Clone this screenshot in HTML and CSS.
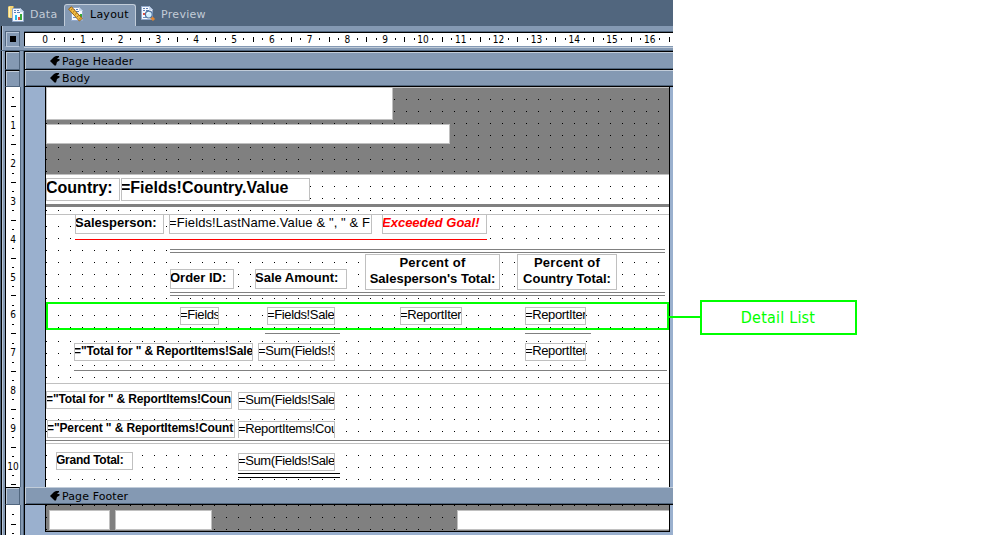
FILE: index.html
```html
<!DOCTYPE html>
<html lang="en">
<head>
<meta charset="utf-8">
<title>Report Designer</title>
<link rel="stylesheet" href="styles.css">
</head>
<body>
<svg class="defs" width="0" height="0" aria-hidden="true">
  <symbol id="arrow" viewBox="0 0 10 10"><path d="M0 5L4 1L6 0H9V1L7 3H9.5V4.5L7 6L6 9.5H4.5L4 9Z" fill="#000"/></symbol>
  <symbol id="sheet" viewBox="0 0 12 14"><path d="M.5.5H8.5L11.5 3.5V13.5H.5Z" fill="#f6f9ff" stroke="#91a8cb"/><path d="M8 0V4H12" fill="#c5d5ed"/><path d="M2 2.5H4M5 2.5H7M2 4.5H4M5 4.5H8" stroke="#5d7fb4"/></symbol>
</svg>
<div class="workspace">
  <main class="designer">
    <nav class="tabs">
      <div class="tab tab-data">
        <svg class="icon" viewBox="0 0 16 16"><path d="M0 1L1 0H5L6 1V11L5 12H1L0 11Z" fill="#f4d476"/><path d="M1 1H2V11H1Z" fill="#fff1b3"/><path d="M5 1H6V11H5Z" fill="#c99b36"/><svg x="4" y="2" width="12" height="14"><use href="#sheet"/></svg><path d="M7 9H9V14H7Z" fill="#27b9e8"/><path d="M10 11H12V14H10Z" fill="#e04f42"/><path d="M12 8H14V14H12Z" fill="#35a938"/></svg>
        <span>Data</span>
      </div>
      <div class="tab tab-layout">
        <svg class="icon" viewBox="0 0 16 16"><svg x="3" y="1" width="12" height="14"><use href="#sheet"/></svg><path d="M5 8.5H8M5 11.5H8" stroke="#6d8fc2"/><path d="M9 9H11V12H9Z" fill="#e04f42"/><path d="M12 8H14V11H12Z" fill="#35a938"/><path d="M.5 3L3.5.8L14.3 12.5L11.3 15Z" fill="#f1bd42" stroke="#986018"/><path d="M3 4L4.5 3M5 6.3L6.5 5M7 8.5L8.7 7.2M9.2 10.8L10.6 9.5M11.2 13L12.8 11.7" stroke="#8b5919" stroke-width=".8"/></svg>
        <span>Layout</span>
      </div>
      <div class="tab tab-preview">
        <svg class="icon" viewBox="0 0 16 16"><svg x="1" y="0" width="12" height="14"><use href="#sheet"/></svg><path d="M3 7H5V9H3Z" fill="#e04f42"/><path d="M3 11.5H6" stroke="#6d8fc2"/><path d="M11 11L14 14" stroke="#de8634" stroke-width="3"/><circle cx="8.8" cy="8.6" r="3.4" fill="#d4efff" stroke="#52749f" stroke-width="1.2"/><path d="M7 8L9 6.3" stroke="#fff"/></svg>
        <span>Preview</span>
      </div>
    </nav>
    <div class="top-ruler">
      <div class="corner"><i></i></div>
      <svg class="ruler-h" id="ruler-h" width="648" height="13"></svg>
    </div>
    <div class="workarea">
      <aside class="side">
        <div class="knob"></div>
        <div class="knob"></div>
        <svg class="ruler-v" id="ruler-body" width="14" height="400"></svg>
        <div class="knob knob-footer"></div>
        <svg class="ruler-v" id="ruler-footer" width="14" height="30"></svg>
      </aside>
      <section class="surface">
        <header class="band"><svg><use href="#arrow"/></svg><span>Page Header</span></header>
        <header class="band"><svg><use href="#arrow"/></svg><span>Body</span></header>
        <div class="canvas">
          <div class="grid title ruled">
            <div class="box" style="left:0;top:0;width:347px;height:33px"></div>
            <div class="box" style="left:0;top:37px;width:404px;height:20px"></div>
          </div>
          <div class="grid country ruled">
            <div class="box large" style="left:0;top:4px;width:74px;height:23px">Country:</div>
            <div class="box large" style="left:75px;top:4px;width:189px;height:23px">=Fields!Country.Value</div>
            <div class="thick"></div>
          </div>
          <div class="grid sales ruled">
            <div class="box bold" style="left:29px;top:0;width:89px;height:20px">Salesperson:</div>
            <div class="box plain" style="left:123px;top:0;width:203px;height:20px">=Fields!LastName.Value &amp; ", " &amp; F</div>
            <div class="box goal" style="left:336px;top:0;width:105px;height:20px">Exceeded Goal!</div>
            <div class="line red" style="left:29px;top:24px;width:412px"></div>
            <div class="double" style="left:124px;top:35px;width:495px"></div>
            <div class="box bold" style="left:124px;top:55px;width:64px;height:20px">Order ID:</div>
            <div class="box bold" style="left:209px;top:55px;width:92px;height:20px">Sale Amount:</div>
            <div class="box head" style="left:319px;top:40px;width:135px;height:36px"><span class="wide">Percent of</span><br>Salesperson's Total:</div>
            <div class="box head" style="left:471px;top:40px;width:100px;height:36px"><span class="wide">Percent of</span><br>Country Total:</div>
            <div class="double" style="left:124px;top:78px;width:495px"></div>
          </div>
          <div class="grid detail">
            <div class="box field" style="left:134px;top:4px;width:39px;height:18px">=Fields</div>
            <div class="box field" style="left:221px;top:4px;width:68px;height:18px">=Fields!Sale</div>
            <div class="box field" style="left:354px;top:4px;width:62px;height:18px">=ReportIter</div>
            <div class="box field" style="left:479px;top:4px;width:61px;height:18px">=ReportIter</div>
            <div class="highlight"></div>
          </div>
          <div class="grid subtotal">
            <div class="line" style="left:219px;top:4px;width:75px"></div>
            <div class="line" style="left:479px;top:4px;width:66px"></div>
            <div class="box total" style="left:28px;top:14px;width:179px;height:18px">="Total for " &amp; ReportItems!Sale</div>
            <div class="box field" style="left:212px;top:14px;width:77px;height:18px">=Sum(Fields!S</div>
            <div class="box field" style="left:479px;top:14px;width:61px;height:18px">=ReportIter</div>
            <div class="line" style="left:28px;top:41px;width:593px"></div>
          </div>
          <div class="grid country-total ruled">
            <div class="box total" style="left:0;top:8px;width:186px;height:18px">="Total for " &amp; ReportItems!Coun</div>
            <div class="box field" style="left:192px;top:9px;width:97px;height:18px">=Sum(Fields!Sale</div>
            <div class="box total" style="left:1px;top:37px;width:188px;height:18px">="Percent " &amp; ReportItems!Count</div>
            <div class="box field open-bottom" style="left:192px;top:38px;width:97px;height:17px">=ReportItems!Cou</div>
            <div class="line" style="left:0;top:57px;width:623px"></div>
          </div>
          <div class="grid grand ruled">
            <div class="box total tight" style="left:10px;top:9px;width:77px;height:18px">Grand Total:</div>
            <div class="box field" style="left:192px;top:10px;width:97px;height:18px">=Sum(Fields!Sale</div>
            <div class="line black" style="left:192px;top:30px;width:102px"></div>
            <div class="line black" style="left:192px;top:34px;width:102px"></div>
          </div>
        </div>
        <header class="band band-footer"><svg><use href="#arrow"/></svg><span>Page Footer</span></header>
        <div class="canvas canvas-footer">
          <div class="grid footer">
            <div class="box" style="left:3px;top:5px;width:61px;height:20px"></div>
            <div class="box" style="left:69px;top:5px;width:97px;height:20px"></div>
            <div class="box open-right" style="left:411px;top:5px;width:212px;height:20px"></div>
          </div>
        </div>
      </section>
    </div>
  </main>
  <aside class="callout">
    <div class="connector"></div>
    <div class="label">Detail List</div>
  </aside>
</div>
<script src="rulers.js"></script>
</body>
</html>
```

FILE: styles.css
```css
* { box-sizing: border-box; }
body { margin: 0; background: #fff; overflow: hidden; font: 13px/15px "Liberation Sans", Arial, sans-serif; color: #000; }
.defs { position: absolute; }
.workspace { display: flex; height: 535px; }
.designer { width: 673px; flex: none; display: flex; flex-direction: column; background: #8499b3; }

.tabs { display: flex; height: 26px; flex: none; padding: 4px 0 0 2px; background: #51667e; font: 11px/20px "DejaVu Sans", sans-serif; color: #c3ccd7; }
.tab { display: flex; align-items: flex-start; height: 22px; padding: 1px 6px 0; }
.tab .icon { width: 16px; height: 16px; flex: none; margin-top: 1px; }
.tab-data { width: 62px; letter-spacing: .3px; }
.tab-data span { margin-left: 6px; }
.tab-layout { width: 72px; padding: 0 0 0 3px; background: #8499b3; border: 1px solid #c1ccd9; border-bottom: 0; border-radius: 3px 3px 0 0; color: #000; letter-spacing: .25px; }
.tab-layout span { margin-left: 6px; }
.tab-preview { padding-left: 4px; letter-spacing: .3px; }
.tab-preview span { margin-left: 5px; }

.top-ruler { display: flex; height: 25px; flex: none; padding: 5px 0 4px 5px; border-bottom: 1px solid #51667e; box-shadow: inset 1px 0 #51667e, inset 2px 0 #000, inset 3px 0 #b9c7d9; }
.corner { width: 15px; height: 16px; margin-right: 4px; border: 1px solid #51667e; border-bottom-color: #b9c7d9; display: flex; align-items: center; justify-content: center; box-shadow: inset 1px 1px #b9c7d9; }
.corner i { width: 6px; height: 6px; background: #000; }
.ruler-h { display: block; box-sizing: content-box; background: #fff; border-top: 1px solid #000; border-left: 1px solid #000; margin-top: 1px; box-shadow: 0 -1px #51667e, 0 1px #8499b3, 0 2px #c1ccd9; }
.ruler-h text, .ruler-v text { font: 10px "DejaVu Sans Condensed", "DejaVu Sans", sans-serif; text-anchor: middle; }

.workarea { display: flex; height: 484px; }
.side { width: 24px; flex: none; padding-left: 5px; display: flex; flex-direction: column; box-shadow: inset 1px 0 #51667e, inset 2px 0 #000, inset 3px 0 #b9c7d9, inset -1px 0 #51667e; }
.knob { width: 15px; height: 17px; flex: none; border: 1px solid #000; border-right-color: #51667e; border-bottom-color: #51667e; box-shadow: inset 1px 1px #c1ccd9; background: #8499b3; }
.knob:first-child { height: 19px; }
.knob-footer { height: 18px; }
.ruler-v { display: block; flex: none; box-sizing: content-box; background: #fff; border-left: 1px solid #000; box-shadow: 1px 0 #51667e; }

.surface { width: 649px; border-left: 1px solid #000; background: #9ab0ce; display: flex; flex-direction: column; }
.band { height: 17px; flex: none; display: flex; align-items: center; padding-left: 25px; border-bottom: 1px solid #000; box-shadow: inset 1px 1px #c1ccd9, inset 0 -1px #51667e; background: #8499b3; font: 11px/13px "DejaVu Sans", sans-serif; letter-spacing: .1px; }
.band:first-child { height: 19px; padding-top: 1px; border-top: 1px solid #000; }
.band svg { width: 10px; height: 10px; margin-right: 2px; }
.band-footer { height: 18px; padding-top: 1px; }
.canvas { width: 625px; margin-left: 20px; border-left: 1px solid #000; border-right: 1px solid #000; }
.canvas-footer { border-bottom: 1px solid #000; }

.grid { --fill: #fff; position: relative; width: 623px; background: linear-gradient(90deg, transparent 1px, var(--fill) 1px) 0 0 / 12px 12px, linear-gradient(#000 1px, var(--fill) 1px) 0 0 / 12px 12px; }
.ruled { box-shadow: inset 0 1px #c0c0c0; }
.title { --fill: #808080; height: 87px; }
.country { height: 40px; }
.sales { height: 89px; }
.detail { height: 26px; }
.subtotal { height: 54px; }
.country-total { height: 60px; }
.grand { height: 44px; }
.footer { --fill: #808080; height: 26px; }

.box { position: absolute; overflow: hidden; white-space: nowrap; background: #fff; border: 1px solid #c0c0c0; }
.bold { font-weight: bold; text-indent: -1px; }
.plain { text-indent: -1px; letter-spacing: .12px; }
.large { font-size: 16px; font-weight: bold; line-height: 17px; text-indent: -1px; }
.goal { font-weight: bold; font-style: italic; color: #f00; text-indent: -1px; }
.head { font-weight: bold; line-height: 16px; text-align: center; }
.wide { letter-spacing: .25px; }
.field { line-height: 14px; text-indent: -1px; letter-spacing: -.38px; }
.total { font-size: 12px; font-weight: bold; line-height: 14px; letter-spacing: -.12px; text-indent: -1px; }
.tight { letter-spacing: -.25px; }
.open-bottom { border-bottom: 0; }
.open-right { border-right: 0; }
.line { position: absolute; height: 3px; background: linear-gradient(#fff 1px, #808080 1px, #808080 2px, transparent 2px); }
.subtotal .line, .country-total .line, .grand .line { height: 1px; background: #808080; }
.grand .black { background: #000; }
.sales .red { background: linear-gradient(#fff 1px, #f00 1px, #f00 2px, transparent 2px); }
.double { position: absolute; height: 4px; background: #fff; border: solid #808080; border-width: 1px 0; }
.thick { position: absolute; left: 0; top: 30px; width: 623px; height: 3px; background: #808080; }
.highlight { position: absolute; left: 0; top: -1px; width: 623px; height: 28px; border: 2px solid #0f0; z-index: 1; }

.callout { display: flex; align-items: center; height: 35px; margin: 300px 0 0 -4px; z-index: 1; }
.connector { width: 31px; height: 2px; margin-top: -2px; background: #0f0; }
.label { width: 157px; height: 35px; border: 2px solid #0f0; color: #0f0; text-align: center; font: 16px/31px "DejaVu Sans Condensed", "DejaVu Sans", sans-serif; letter-spacing: .2px; padding-right: 1px; }
```

FILE: rulers.js
```js
const NS = "http://www.w3.org/2000/svg";
const CM = 37.8;

function add(svg, name, attrs, text) {
  const el = document.createElementNS(NS, name);
  for (const key in attrs) el.setAttribute(key, attrs[key]);
  if (text !== undefined) el.textContent = text;
  svg.appendChild(el);
}

// Quarter marks: short at 1/4 and 3/4, long at 1/2, number at each centimetre.
function drawRuler(id, vertical, origin, length) {
  const svg = document.getElementById(id);
  for (let q = vertical ? 1 : 0; origin + q * CM / 4 < length; q++) {
    const pos = origin + q * CM / 4;
    if (q % 4 === 0) {
      const at = vertical ? { x: 7, y: pos + 4 } : { x: pos, y: 10 };
      add(svg, "text", at, q / 4);
    } else {
      const size = q % 2 ? 2 : 5;
      const mid = vertical ? 7 : 6;
      const a = Math.round(pos), b = Math.round(mid - size / 2);
      add(svg, "rect", vertical
        ? { x: b, y: a, width: size, height: 1 }
        : { x: a, y: b, width: 1, height: size });
    }
  }
}

drawRuler("ruler-h", false, 20, 648);
drawRuler("ruler-body", true, 0.5, 400);
drawRuler("ruler-footer", true, 0, 30);
```
